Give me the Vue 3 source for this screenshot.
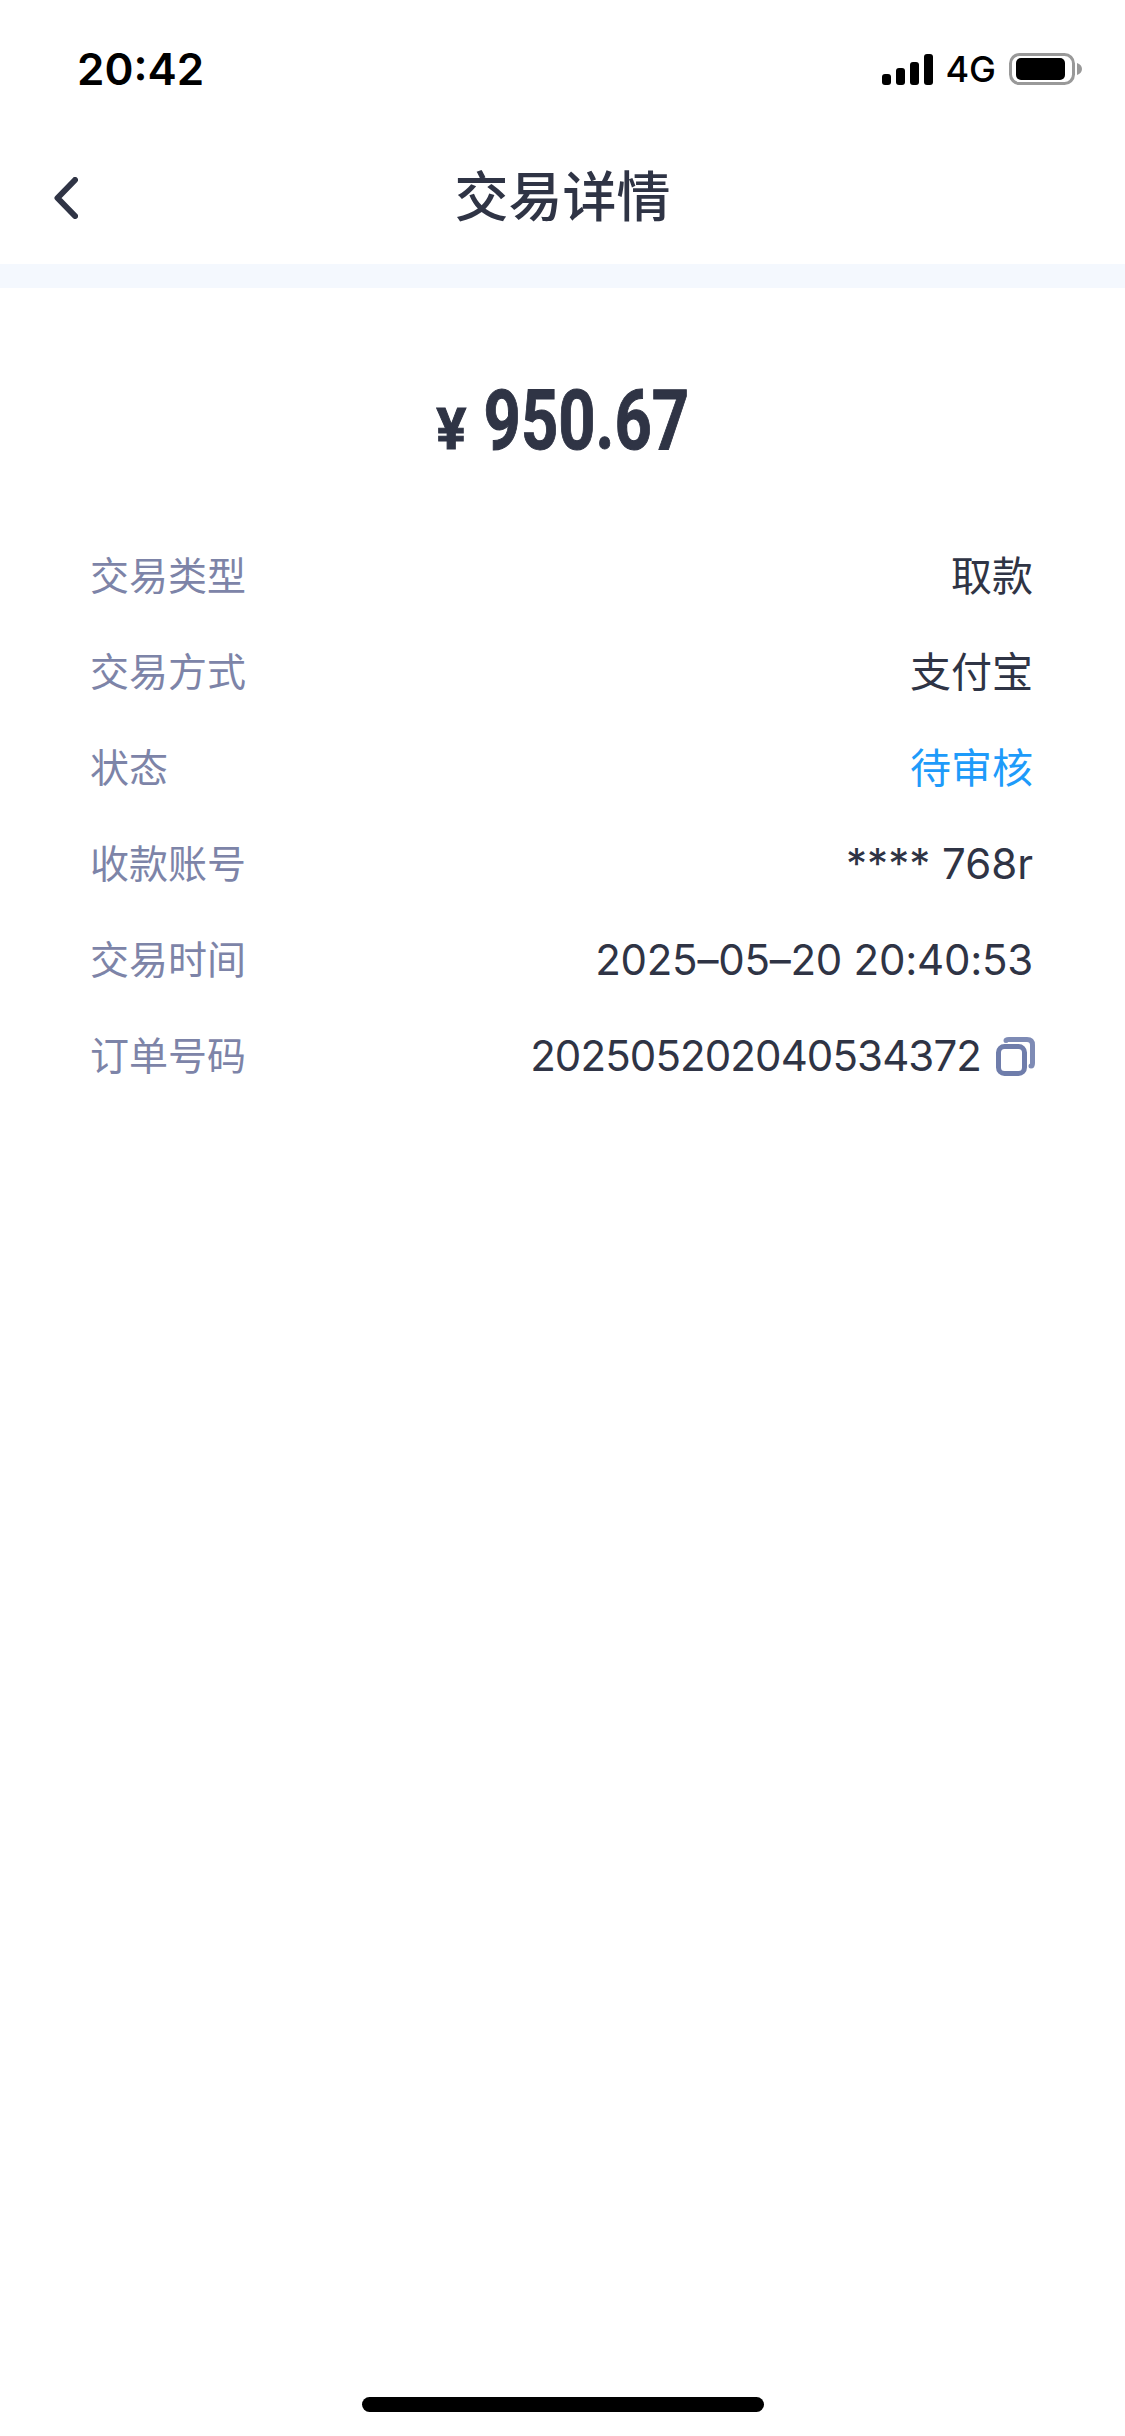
<script setup>
const rows = [
  { label: '交易类型', value: '取款', type: 'cjk' },
  { label: '交易方式', value: '支付宝', type: 'cjk' },
  { label: '状态', value: '待审核', type: 'cjk pending' },
  { label: '收款账号', value: '**** 768r' },
  { label: '交易时间', value: '2025–05–20 20:40:53', type: 'date' },
  { label: '订单号码', value: '202505202040534372', type: 'tight', copy: true }
];
</script>

<template>
  <div class="page">
    <div class="status-bar">
      <span class="clock">20:42</span>
      <div class="status-right">
        <svg class="signal" width="51" height="31" viewBox="0 0 51 31">
          <rect x="0" y="20" width="9" height="11" rx="3" />
          <rect x="14" y="14" width="9" height="17" rx="3" />
          <rect x="28" y="8" width="9" height="23" rx="3" />
          <rect x="42" y="0" width="9" height="31" rx="3" />
        </svg>
        <span class="network">4G</span>
        <svg class="battery" width="73" height="32" viewBox="0 0 73 32">
          <rect x="1.5" y="1.5" width="63" height="29" rx="9" fill="none" stroke="#999" stroke-width="3" />
          <rect x="7" y="5" width="49" height="22" rx="5" fill="#000" />
          <path d="M68 10 C71 11 73 13 73 16 C73 19 71 21 68 22 Z" fill="#999" />
        </svg>
      </div>
    </div>

    <div class="nav-bar">
      <svg class="back" width="24" height="42" viewBox="0 0 24 42">
        <path d="M21 3 L3.5 21 L21 39" fill="none" stroke="#2f3445" stroke-width="6" stroke-linecap="round" stroke-linejoin="round" />
      </svg>
      <span class="title">交易详情</span>
      <span></span>
    </div>
    <div class="band"></div>

    <div class="amount-wrap">
      <div class="amount"><span class="yen">¥</span>950.67</div>
    </div>

    <div class="rows">
      <div v-for="row in rows" :key="row.label" class="row">
        <span class="label">{{ row.label }}</span>
        <span class="value" :class="row.type">
          {{ row.value }}
          <svg v-if="row.copy" class="copy" width="39" height="39" viewBox="0 0 39 39">
            <path d="M10 3.5 Q10 2.5 13 2.5 H31 Q36.5 2.5 36.5 8 V26 Q36.5 29 35 29" fill="none" stroke="#7e8bb5" stroke-width="5" stroke-linecap="round" />
            <rect x="2.5" y="9.5" width="26" height="27" rx="6" fill="#fff" stroke="#6f7dab" stroke-width="5" />
          </svg>
        </span>
      </div>
    </div>

    <div class="home-wrap">
      <div class="home-bar"></div>
    </div>
  </div>
</template>

<style scoped>
.page {
  width: 1125px;
  height: 2436px;
  background: #fff;
  display: flex;
  flex-direction: column;
  font-family: Inter, "Noto Sans CJK SC", sans-serif;
  color: #2f3445;
  overflow: hidden;
}

.status-bar {
  height: 132px;
  box-sizing: border-box;
  display: flex;
  justify-content: space-between;
  align-items: center;
  padding: 6px 43px 0 77px;
}
.clock {
  font-size: 44px;
  font-weight: 600;
  line-height: 1;
  color: #000;
}
.status-right {
  display: flex;
  align-items: center;
}
.signal { fill: #000; }
.network {
  font-size: 36px;
  font-weight: 500;
  line-height: 1;
  color: #000;
  margin: 0 13px 0 12px;
}

.nav-bar {
  height: 132px;
  box-sizing: border-box;
  padding: 0 54px;
  display: grid;
  grid-template-columns: 1fr auto 1fr;
  align-items: center;
}
.title {
  font-family: "Noto Sans CJK SC", sans-serif;
  font-size: 54px;
  font-weight: 500;
  line-height: 1;
  padding-bottom: 8px;
}
.band {
  height: 24px;
  background: #f4f8fe;
}

.amount-wrap {
  height: 240px;
  box-sizing: border-box;
  padding: 25px 0 0 3px;
  display: flex;
  justify-content: center;
  align-items: center;
}
.amount {
  font-family: Roboto, sans-serif;
  font-size: 84px;
  font-weight: 700;
  line-height: 1;
  transform: scaleX(0.775);
  -webkit-text-stroke: 1px #2f3445;
}
.yen {
  display: inline-block;
  font-size: 58px;
  margin-right: 26px;
  transform: scaleX(1.25);
}

.rows {
  padding: 0 92px 0 90px;
}
.row {
  height: 96px;
  display: flex;
  justify-content: space-between;
  align-items: center;
  font-size: 42px;
  line-height: 1;
}
.label {
  font-family: "Noto Sans CJK SC", sans-serif;
  font-size: 39px;
  padding-bottom: 6px;
  color: #7d84a8;
}
.value {
  display: flex;
  align-items: center;
}
.cjk {
  font-family: "Noto Sans CJK SC", sans-serif;
  font-size: 41px;
  padding-bottom: 6px;
}
.date {
  letter-spacing: -0.25px;
}
.tight {
  letter-spacing: -0.9px;
}
.pending {
  color: #1e9bfa;
}
.copy {
  margin-left: 15px;
  margin-right: -2px;
}

.home-wrap {
  margin-top: auto;
  padding-bottom: 24px;
  display: flex;
  justify-content: center;
}
.home-bar {
  width: 402px;
  height: 15px;
  border-radius: 8px;
  background: #000;
}
</style>
